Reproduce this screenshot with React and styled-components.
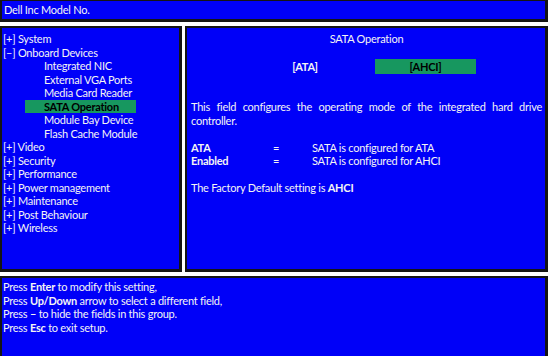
import React from 'react';
import styled, { createGlobalStyle } from 'styled-components';

const GlobalStyle = createGlobalStyle`
  html, body {
    margin: 0;
    padding: 0;
    background: #ffffff;
    overflow: hidden;
  }
  body {
    font-family: Lato, "Open Sans", sans-serif;
    font-size: 11px;
    letter-spacing: -0.25px;
    color: #f4f4f4;
  }
`;

const Screen = styled.div`
  width: 548px;
  height: 356px;
  display: flex;
  flex-direction: column;
  gap: 4px;
`;

const Panel = styled.div`
  background: #0000f8;
  border: 2px solid #141414;
  border-right-width: 3px;
  border-bottom-width: 3px;
  box-sizing: border-box;
  line-height: 13.5px;
`;

const TitleBar = styled(Panel)`
  height: 22px;
  border-top-width: 1px;
  padding: 2px 0 0 2px;
`;

const Middle = styled.div`
  display: flex;
  gap: 3px;
  height: 246px;
`;

const Menu = styled(Panel)`
  width: 182px;
  padding: 4px 0 0 1px;
`;

const MenuItem = styled.div`
  padding-left: ${p => (p.$sub ? 41 : 0)}px;
  white-space: nowrap;
`;

const Selected = styled.div`
  margin-left: 22px;
  width: 111px;
  padding-left: 19px;
  box-sizing: border-box;
  background: #17975f;
  color: #000;
  font-weight: 700;
`;

const Detail = styled(Panel)`
  flex: 1;
  padding: 4px 3px 0 4px;
`;

const DetailTitle = styled.div`
  text-align: center;
  margin-bottom: 13.5px;
`;

const Options = styled.div`
  display: flex;
  align-items: center;
  height: 15px;
  margin-bottom: 26px;
  font-weight: 700;
`;

const Option = styled.div`
  width: ${p => p.$w}px;
  margin-left: ${p => p.$ml}px;
  text-align: center;
  line-height: 15px;
  background: ${p => (p.$active ? '#17975f' : 'transparent')};
  color: ${p => (p.$active ? '#000' : 'inherit')};
`;

const Para = styled.div`
  margin: 0 0 13.5px;
`;

const JustLine = styled.div`
  text-align: justify;
  text-align-last: justify;
`;

const Values = styled.div`
  display: grid;
  grid-template-columns: 82px 39px auto;
  margin-bottom: 13.5px;
`;

const Key = styled.div`
  font-weight: 700;
`;

const Help = styled(Panel)`
  flex: 1;
  border-bottom: none;
  padding: 2px 0 0 1px;
`;

const menu = [
  { label: '[+] System' },
  { label: '[\u2013] Onboard Devices' },
  { label: 'Integrated NIC', sub: true },
  { label: 'External VGA Ports', sub: true },
  { label: 'Media Card Reader', sub: true },
  { label: 'SATA Operation', sub: true, selected: true },
  { label: 'Module Bay Device', sub: true },
  { label: 'Flash Cache Module', sub: true },
  { label: '[+] Video' },
  { label: '[+] Security' },
  { label: '[+] Performance' },
  { label: '[+] Power management' },
  { label: '[+] Maintenance' },
  { label: '[+] Post Behaviour' },
  { label: '[+] Wireless' },
];

export default function App() {
  return (
    <>
      <GlobalStyle />
      <Screen>
        <TitleBar>Dell Inc Model No.</TitleBar>
        <Middle>
          <Menu>
            {menu.map(item =>
              item.selected ? (
                <Selected key={item.label}>{item.label}</Selected>
              ) : (
                <MenuItem key={item.label} $sub={item.sub}>
                  {item.label}
                </MenuItem>
              )
            )}
          </Menu>
          <Detail>
            <DetailTitle>SATA Operation</DetailTitle>
            <Options>
              <Option $w={40} $ml={94}>[ATA]</Option>
              <Option $w={101} $ml={50} $active>[AHCI]</Option>
            </Options>
            <Para>
              <JustLine>
                This field configures the operating mode of the integrated hard drive
              </JustLine>
              <div>controller.</div>
            </Para>
            <Values>
              <Key>ATA</Key>
              <div>=</div>
              <div>SATA is configured for ATA</div>
              <Key>Enabled</Key>
              <div>=</div>
              <div>SATA is configured for AHCI</div>
            </Values>
            <div>
              The Factory Default setting is <b>AHCI</b>
            </div>
          </Detail>
        </Middle>
        <Help>
          <div>Press <b>Enter</b> to modify this setting,</div>
          <div>Press <b>Up/Down</b> arrow to select a different field,</div>
          <div>Press <b>{'\u2013'}</b> to hide the fields in this group.</div>
          <div>Press <b>Esc</b> to exit setup.</div>
        </Help>
      </Screen>
    </>
  );
}
